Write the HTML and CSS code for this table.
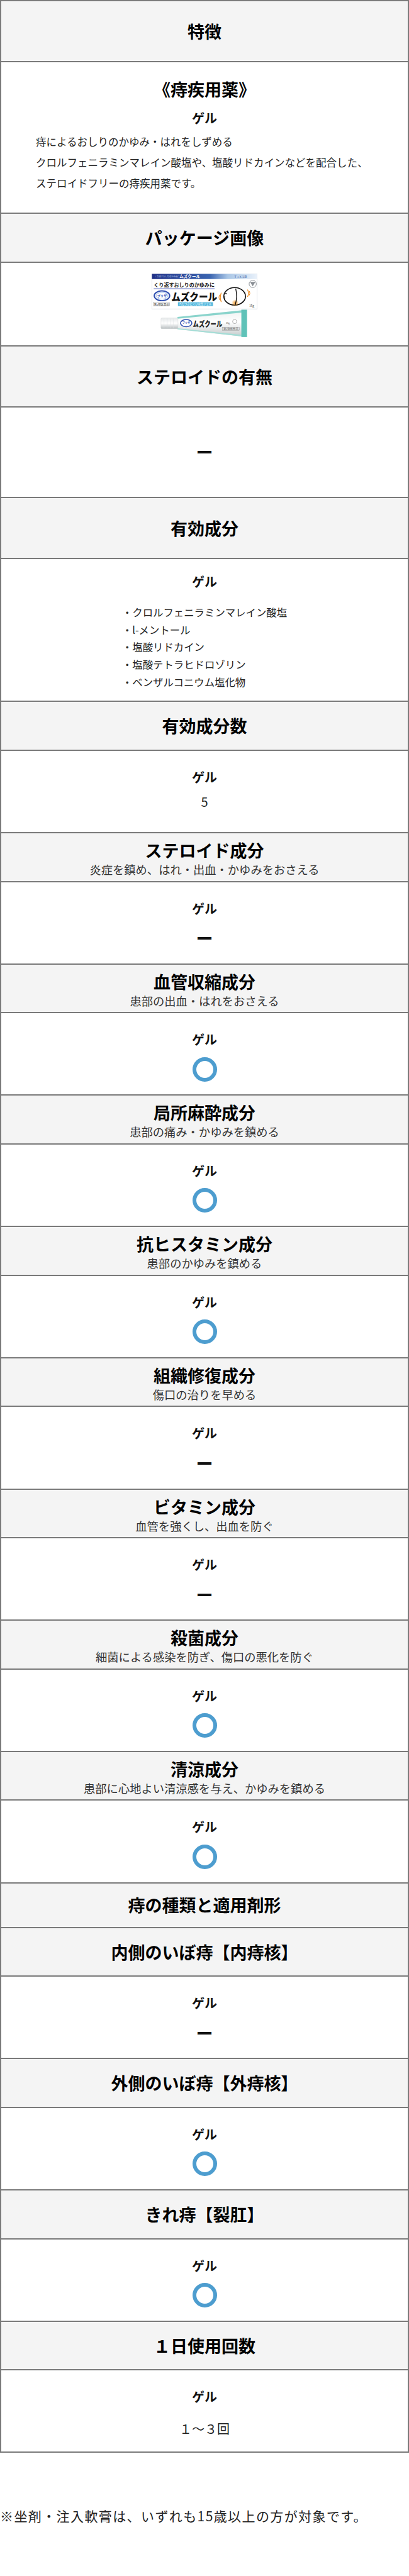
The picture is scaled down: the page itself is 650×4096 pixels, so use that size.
FILE: index.html
```html
<!DOCTYPE html>
<html lang="ja">
<head>
<meta charset="utf-8">
<title>ムズクール 比較表</title>
<link rel="stylesheet" href="styles.css">
</head>
<body>
<div class="table">
  <div class="row head tall"><h2 class="ttl">特徴</h2></div>
  <div class="row cell intro">
    <p class="lead">《痔疾用薬》</p>
    <p class="form">ゲル</p>
    <p class="desc">痔によるおしりのかゆみ・はれをしずめる<br>クロルフェニラミンマレイン酸塩や、塩酸リドカインなどを配合した、<br>ステロイドフリーの痔疾用薬です。</p>
  </div>

  <div class="row head"><h2 class="ttl">パッケージ画像</h2></div>
  <div class="row pic">
    <svg class="pkg" viewBox="0 0 205 123" width="168" height="101" xmlns="http://www.w3.org/2000/svg">
      <defs>
        <linearGradient id="band" x1="0" x2="1" y1="0" y2="0">
          <stop offset="0" stop-color="#1f2f86"/>
          <stop offset="0.55" stop-color="#3a64b0"/>
          <stop offset="0.72" stop-color="#a9c6e6"/>
          <stop offset="1" stop-color="#e9f1fa"/>
        </linearGradient>
        <linearGradient id="tube" x1="0" x2="0" y1="0" y2="1">
          <stop offset="0" stop-color="#eef1f1"/>
          <stop offset="0.45" stop-color="#ffffff"/>
          <stop offset="1" stop-color="#c4cacb"/>
        </linearGradient>
        <linearGradient id="cap" x1="0" x2="0" y1="0" y2="1">
          <stop offset="0" stop-color="#e6e9ea"/>
          <stop offset="0.5" stop-color="#ffffff"/>
          <stop offset="1" stop-color="#b6bcbe"/>
        </linearGradient>
        <radialGradient id="glow">
          <stop offset="0" stop-color="#f39a2b"/>
          <stop offset="1" stop-color="#f39a2b" stop-opacity="0"/>
        </radialGradient>
      </defs>
      <rect x="0.5" y="0.5" width="204" height="68" fill="#fff" stroke="#d9dde3"/>
      <rect x="0.5" y="0.5" width="204" height="10" fill="url(#band)"/>
      <text x="6" y="7" font-size="4" fill="#dbe4ff">くり返すおしりのかゆみに</text>
      <text x="54" y="9" font-size="8" font-weight="700" fill="#fff">ムズクール</text>
      <text x="160" y="8" font-size="5" fill="#2c4f9a">すっと冷感</text>
      <text x="4" y="26" font-size="10" font-weight="700" fill="#1a1a1a" textLength="118" lengthAdjust="spacingAndGlyphs">くり返すおしりのかゆみに</text>
      <rect x="4" y="28.5" width="118" height="1.6" fill="#7e88cf"/>
      <ellipse cx="20" cy="43" rx="15" ry="9.5" fill="#fff" stroke="#2f4fb0" stroke-width="2.4"/>
      <ellipse cx="20" cy="43" rx="11.5" ry="6.5" fill="#fff" stroke="#8fb6e6" stroke-width="1"/>
      <text x="20" y="45.3" font-size="6.2" font-weight="700" fill="#2f4fb0" text-anchor="middle">プリザ</text>
      <text x="38" y="52.5" font-size="20" font-weight="900" fill="#111" textLength="89" lengthAdjust="spacingAndGlyphs">ムズクール</text>
      <rect x="51" y="55.5" width="68" height="7.5" fill="#57b9de"/>
      <text x="53" y="61.3" font-size="5.4" fill="#fff" textLength="63" lengthAdjust="spacingAndGlyphs">べたつきにくい水性ジェル</text>
      <rect x="3" y="56.5" width="32" height="6.5" fill="#fff" stroke="#666" stroke-width="0.5"/>
      <text x="4.5" y="61.7" font-size="5" fill="#333" textLength="29" lengthAdjust="spacingAndGlyphs">第2類医薬品</text>
      <ellipse cx="161" cy="44" rx="21" ry="17" fill="#fff" stroke="#111" stroke-width="2"/>
      <circle cx="162" cy="57" r="7" fill="url(#glow)"/>
      <path d="M163 29 Q167 45 162 61" fill="none" stroke="#111" stroke-width="1.6"/>
      <path d="M143 38 l3 1.2" fill="none" stroke="#111" stroke-width="1.4"/>
      <path d="M142 44 q-3 2.5 0 5" fill="none" stroke="#111" stroke-width="1.2"/>
      <path d="M135 37 q-3.5 9 0 18" fill="none" stroke="#f08c1e" stroke-width="1.5"/>
      <path d="M131.5 41 q-2 5 0 10" fill="none" stroke="#f08c1e" stroke-width="1.2"/>
      <path d="M186 31 q3.5 7 0 14" fill="none" stroke="#f08c1e" stroke-width="1.5"/>
      <path d="M189.5 34 q2 4.5 0 8" fill="none" stroke="#f08c1e" stroke-width="1.2"/>
      <circle cx="196" cy="20" r="7" fill="none" stroke="#8a8f95" stroke-width="1.2"/>
      <path d="M190.8 16 h10.4 l-5.2 8.5 z" fill="#8a8f95"/>
      <text x="189" y="64" font-size="6" fill="#333">15g</text>

      <path d="M50 84 L176 71 L176 122 L50 108 Z" fill="url(#tube)"/>
      <path d="M50 84 L176 71 L176 75.5 L50 87.5 Z" fill="#8ad4cc"/>
      <path d="M50 106 L176 119 L176 122 L50 108 Z" fill="#a3ddd6"/>
      <rect x="174" y="70" width="11" height="53" fill="#5fc2b8"/>
      <rect x="18" y="86" width="33" height="21" rx="2" fill="url(#cap)" stroke="#cfd4d6" stroke-width="0.5"/>
      <path d="M24 87 v19 M30 87 v19 M36 87 v19 M42 87 v19" stroke="#dde1e3" stroke-width="0.6"/>
      <ellipse cx="67" cy="96" rx="11" ry="7" fill="#fff" stroke="#2f4fb0" stroke-width="2"/>
      <text x="67" y="98" font-size="5" font-weight="700" fill="#2f4fb0" text-anchor="middle">プリザ</text>
      <text x="80" y="103" font-size="15" font-weight="900" fill="#222" textLength="57" lengthAdjust="spacingAndGlyphs">ムズクール</text>
      <text x="144" y="97" font-size="4.5" fill="#444">15g</text>
      <circle cx="161" cy="93" r="4" fill="none" stroke="#888" stroke-width="0.8"/>
      <rect x="137" y="104" width="33" height="6" fill="none" stroke="#777" stroke-width="0.4"/>
      <text x="139" y="108.8" font-size="4.5" fill="#444" textLength="29" lengthAdjust="spacingAndGlyphs">第2類医薬品</text>
    </svg>
  </div>

  <div class="row head tall"><h2 class="ttl">ステロイドの有無</h2></div>
  <div class="row cell solo"><div class="val dash">ー</div></div>

  <div class="row head tall"><h2 class="ttl">有効成分</h2></div>
  <div class="row cell ingr">
    <p class="form">ゲル</p>
    <ul class="list">
      <li>・クロルフェニラミンマレイン酸塩</li>
      <li>・l-メントール</li>
      <li>・塩酸リドカイン</li>
      <li>・塩酸テトラヒドロゾリン</li>
      <li>・ベンザルコニウム塩化物</li>
    </ul>
  </div>

  <div class="row head"><h2 class="ttl">有効成分数</h2></div>
  <div class="row cell up"><p class="form">ゲル</p><div class="val">5</div></div>

  <div class="row head sub"><h2 class="ttl">ステロイド成分</h2><p class="note">炎症を鎮め、はれ・出血・かゆみをおさえる</p></div>
  <div class="row cell"><p class="form">ゲル</p><div class="val dash">ー</div></div>

  <div class="row head sub"><h2 class="ttl">血管収縮成分</h2><p class="note">患部の出血・はれをおさえる</p></div>
  <div class="row cell"><p class="form">ゲル</p><span class="circle"></span></div>

  <div class="row head sub"><h2 class="ttl">局所麻酔成分</h2><p class="note">患部の痛み・かゆみを鎮める</p></div>
  <div class="row cell"><p class="form">ゲル</p><span class="circle"></span></div>

  <div class="row head sub"><h2 class="ttl">抗ヒスタミン成分</h2><p class="note">患部のかゆみを鎮める</p></div>
  <div class="row cell"><p class="form">ゲル</p><span class="circle"></span></div>

  <div class="row head sub"><h2 class="ttl">組織修復成分</h2><p class="note">傷口の治りを早める</p></div>
  <div class="row cell"><p class="form">ゲル</p><div class="val dash">ー</div></div>

  <div class="row head sub"><h2 class="ttl">ビタミン成分</h2><p class="note">血管を強くし、出血を防ぐ</p></div>
  <div class="row cell"><p class="form">ゲル</p><div class="val dash">ー</div></div>

  <div class="row head sub"><h2 class="ttl">殺菌成分</h2><p class="note">細菌による感染を防ぎ、傷口の悪化を防ぐ</p></div>
  <div class="row cell"><p class="form">ゲル</p><span class="circle"></span></div>

  <div class="row head sub"><h2 class="ttl">清涼成分</h2><p class="note">患部に心地よい清涼感を与え、かゆみを鎮める</p></div>
  <div class="row cell"><p class="form">ゲル</p><span class="circle"></span></div>

  <div class="row head short"><h2 class="ttl">痔の種類と適用剤形</h2></div>

  <div class="row head"><h2 class="ttl">内側のいぼ痔【内痔核】</h2></div>
  <div class="row cell"><p class="form">ゲル</p><div class="val dash">ー</div></div>

  <div class="row head"><h2 class="ttl">外側のいぼ痔【外痔核】</h2></div>
  <div class="row cell"><p class="form">ゲル</p><span class="circle"></span></div>

  <div class="row head"><h2 class="ttl">きれ痔【裂肛】</h2></div>
  <div class="row cell"><p class="form">ゲル</p><span class="circle"></span></div>

  <div class="row head"><h2 class="ttl">１日使用回数</h2></div>
  <div class="row cell down"><p class="form">ゲル</p><div class="val">１～３回</div></div>
</div>

<p class="foot">※坐剤・注入軟膏は、いずれも15歳以上の方が対象です。</p>
</body>
</html>
```

FILE: styles.css
```css
* {
  box-sizing: border-box;
}

body {
  margin: 0;
  background: #fff;
  color: #111;
  font-family: "Noto Sans CJK JP", "Noto Sans", sans-serif;
}

.table {
  width: 650px;
  border-top: 2px solid #7a7a7a;
  border-left: 2px solid #7a7a7a;
  border-right: 2px solid #7a7a7a;
}

.row {
  border-bottom: 2px solid #7a7a7a;
  text-align: center;
}

/* header rows */
.head {
  background: #f4f4f4;
  padding: 20px 0;
}

.head.tall {
  padding: 29.6px 0;
}

.head.short {
  padding: 16.8px 0;
}

.head.sub {
  padding: 9px 0 6.5px;
}

.ttl {
  margin: 0;
  font-size: 27px;
  line-height: 35.5px;
  font-weight: 700;
  color: #000;
}

.head.sub .ttl {
  line-height: 36px;
}

.note {
  margin: 0;
  font-size: 18.3px;
  line-height: 24px;
  color: #333;
}

/* body rows */
.cell {
  background: #fff;
  padding: 26px 0 20.7px;
}

.form {
  margin: 0;
  font-size: 20px;
  line-height: 32px;
  font-weight: 700;
  color: #111;
}

.val {
  margin-top: 11.5px;
  height: 39px;
  line-height: 39px;
  font-size: 20px;
  color: #222;
}

.dash {
  font-size: 27px;
  font-weight: 700;
  color: #111;
}

.circle {
  display: block;
  width: 39px;
  height: 39px;
  margin: 11.5px auto 0;
  border: 6px solid #4d9dcf;
  border-radius: 50%;
}

.cell.up {
  padding-bottom: 28.7px;
}

.cell.up .val {
  margin-top: 3.5px;
}

.cell.down {
  padding-bottom: 17.7px;
}

.cell.down .val {
  margin-top: 14.5px;
}

.cell.solo {
  padding: 51.5px 0 51.6px;
}

.cell.solo .val {
  margin-top: 0;
}

/* intro row */
.cell.intro {
  padding: 24px 0 30.6px;
}

.lead {
  margin: 0;
  font-size: 27px;
  line-height: 38px;
  font-weight: 700;
  color: #000;
}

.intro .form {
  margin-top: 11px;
}

.desc {
  margin: 5px 0 0;
  padding-left: 55px;
  text-align: left;
  white-space: nowrap;
  font-size: 16.5px;
  line-height: 33px;
  color: #222;
}

/* package picture */
.pic {
  background: #fff;
  padding: 17px 0 13.5px;
}

.pkg {
  display: block;
  margin: 0 auto;
}

/* ingredients */
.cell.ingr {
  padding: 20px 0 16.3px;
}

.list {
  width: fit-content;
  margin: 19.4px auto 0;
  padding: 0;
  list-style: none;
  text-align: left;
  font-size: 16.4px;
  line-height: 27.6px;
  color: #222;
}

/* footnote */
.foot {
  margin: 85px 0 0;
  font-size: 21px;
  line-height: 30px;
  letter-spacing: 1.4px;
  color: #222;
}
```
